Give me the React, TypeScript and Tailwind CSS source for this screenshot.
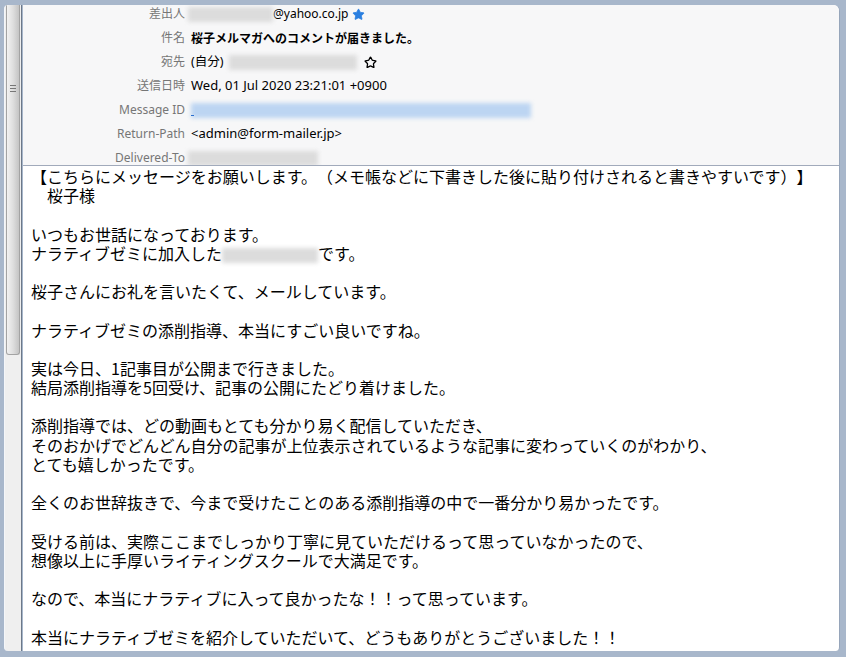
import * as React from 'react';
import { Star } from 'lucide-react';

const headerFont = { fontFamily: '"Noto Sans", "Noto Sans CJK JP", sans-serif' };
const bodyFont = { fontFamily: '"Noto Sans CJK JP", "Noto Sans", sans-serif' };

const Blur: React.FC<{ w: string; blue?: boolean }> = ({ w, blue }) => (
  <span
    className={`inline-block h-[15px] ${w} ${blue ? 'bg-[#bcd5f2]' : 'bg-[#dcdcdc]'} blur-[2px] align-middle`}
  />
);

const HeaderRow: React.FC<{ label: string; children: React.ReactNode }> = ({ label, children }) => (
  <div className="flex h-[24px] items-center">
    <div className="w-[162px] shrink-0 text-right text-[12px] text-[#767676]">{label}</div>
    <div className="ml-[6px] flex items-center text-[12px] text-black whitespace-nowrap">{children}</div>
  </div>
);

const lines: React.ReactNode[] = [
  '【こちらにメッセージをお願いします。（メモ帳などに下書きした後に貼り付けされると書きやすいです）】',
  '　桜子様',
  '',
  'いつもお世話になっております。',
  <>
    ナラティブゼミに加入した<Blur w="w-[96px]" />です。
  </>,
  '',
  '桜子さんにお礼を言いたくて、メールしています。',
  '',
  'ナラティブゼミの添削指導、本当にすごい良いですね。',
  '',
  '実は今日、1記事目が公開まで行きました。',
  '結局添削指導を5回受け、記事の公開にたどり着けました。',
  '',
  '添削指導では、どの動画もとても分かり易く配信していただき、',
  'そのおかげでどんどん自分の記事が上位表示されているような記事に変わっていくのがわかり、',
  'とても嬉しかったです。',
  '',
  '全くのお世辞抜きで、今まで受けたことのある添削指導の中で一番分かり易かったです。',
  '',
  '受ける前は、実際ここまでしっかり丁寧に見ていただけるって思っていなかったので、',
  '想像以上に手厚いライティングスクールで大満足です。',
  '',
  'なので、本当にナラティブに入って良かったな！！って思っています。',
  '',
  '本当にナラティブゼミを紹介していただいて、どうもありがとうございました！！',
];

export default function App() {
  return (
    <div className="w-[846px] h-[657px] bg-[#a8b7cb] flex pt-[5px] pl-[4px] pr-[6px] pb-[6px] overflow-hidden">
      {/* left splitter / scroll column */}
      <div className="w-[18px] shrink-0 flex flex-col bg-[#efefef] border-l border-[#f4f6f9] border-r border-r-[#6c7889] rounded-tl-[4px] rounded-bl-[4px] overflow-hidden">
        <div className="h-[350px] mx-[1px] rounded-b-[3px] border border-t-0 border-[#a3a3a3] bg-gradient-to-r from-[#f2f2f2] via-[#dedede] to-[#c4c4c4] flex flex-col items-center pt-[80px]">
          <div className="flex flex-col gap-[2px]">
            <div className="w-[6px] h-[1px] bg-[#777]" />
            <div className="w-[6px] h-[1px] bg-[#777]" />
            <div className="w-[6px] h-[1px] bg-[#777]" />
          </div>
        </div>
      </div>

      {/* message panel */}
      <div className="ml-[1px] flex-1 flex flex-col bg-white rounded-tr-[6px] rounded-br-[4px] overflow-hidden border-r border-[#96a5ba]">
        <div className="h-[161px] shrink-0 bg-[#f7f7f8] border-b border-[#a1aabb] overflow-hidden" style={headerFont}>
          <div className="-mt-[3px]">
            <HeaderRow label="差出人">
              <span className="-ml-[3px]"><Blur w="w-[85px]" /></span>
              <span className="text-[12px]">@yahoo.co.jp</span>
              <Star className="ml-[3px] text-[#2a7fe0]" size={13} fill="currentColor" strokeWidth={1.5} />
            </HeaderRow>
            <HeaderRow label="件名">
              <span className="font-bold" style={bodyFont}>桜子メルマガへのコメントが届きました。</span>
            </HeaderRow>
            <HeaderRow label="宛先">
              <span className="text-[12.5px]">(自分)</span>
              <span className="ml-[5px]"><Blur w="w-[128px]" /></span>
              <Star className="ml-[7px] text-black" size={13} strokeWidth={2.4} />
            </HeaderRow>
            <HeaderRow label="送信日時">
              <span className="text-[13px]">Wed, 01 Jul 2020 23:21:01 +0900</span>
            </HeaderRow>
            <HeaderRow label="Message ID">
              <span className="relative">
                <Blur w="w-[340px]" blue />
                <span className="absolute left-0 bottom-[3px] w-[3px] h-[1px] bg-[#2a6fd0]" />
              </span>
            </HeaderRow>
            <HeaderRow label="Return-Path">
              <span className="text-[13px]">&lt;admin@form-mailer.jp&gt;</span>
            </HeaderRow>
            <HeaderRow label="Delivered-To">
              <span className="-ml-[3px]"><Blur w="w-[130px]" /></span>
            </HeaderRow>
          </div>
        </div>

        <div
          className="flex-1 overflow-hidden pl-[8px] pt-[1px] text-[16px] leading-[19.2px] text-black whitespace-pre [text-spacing-trim:space-all] [font-feature-settings:'halt'_0,'chws'_0]"
          style={bodyFont}
        >
          {lines.map((l, i) => (
            <div key={i} className="h-[19.2px]">
              {l}
            </div>
          ))}
        </div>
      </div>
    </div>
  );
}
